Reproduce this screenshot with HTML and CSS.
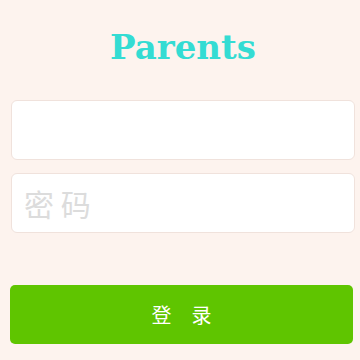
FILE: index.html
```html
<!DOCTYPE html>
<html lang="zh">
<head>
    <meta charset="UTF-8">
    <meta name="viewport" content="width=device-width, initial-scale=1.0">
    <title>Parents</title>
    <link rel="stylesheet" href="styles.css">
</head>
<body>
    <div class="login-container">
        <h1 class="title">Parents</h1>
        <form class="login-form">
            <input type="text" class="field">
            <input type="password" class="field" placeholder="密 码">
            <button type="submit" class="login-button">登　录</button>
        </form>
    </div>
</body>
</html>
```

FILE: styles.css
```css
body {
    margin: 0;
    background-color: #fdf3ee;
    font-family: "Noto Sans CJK SC", "Noto Sans", sans-serif;
}
.login-container {
    padding: 0 5px 0 11px;
}
.title {
    margin: 0;
    padding-top: 25px;
    height: 100px;
    box-sizing: border-box;
    text-align: center;
    font-family: "DejaVu Serif", serif;
    font-weight: bold;
    font-size: 34px;
    line-height: 44px;
    color: #34dcd3;
}
.login-form {
    display: flex;
    flex-direction: column;
}
.field {
    height: 60px;
    margin-bottom: 13px;
    padding: 0 12px;
    border: 1px solid #f0e2dc;
    border-radius: 6px;
    background: #fff;
    font-size: 30px;
    box-sizing: border-box;
    font-family: inherit;
}
.field::placeholder {
    color: #dcdcdc;
}
.login-button {
    margin: 39px 2px 0 -1px;
    height: 59px;
    border: none;
    border-radius: 5px;
    background-color: #5fc500;
    color: #fff;
    font-size: 20px;
    font-family: inherit;
    cursor: pointer;
}
```
